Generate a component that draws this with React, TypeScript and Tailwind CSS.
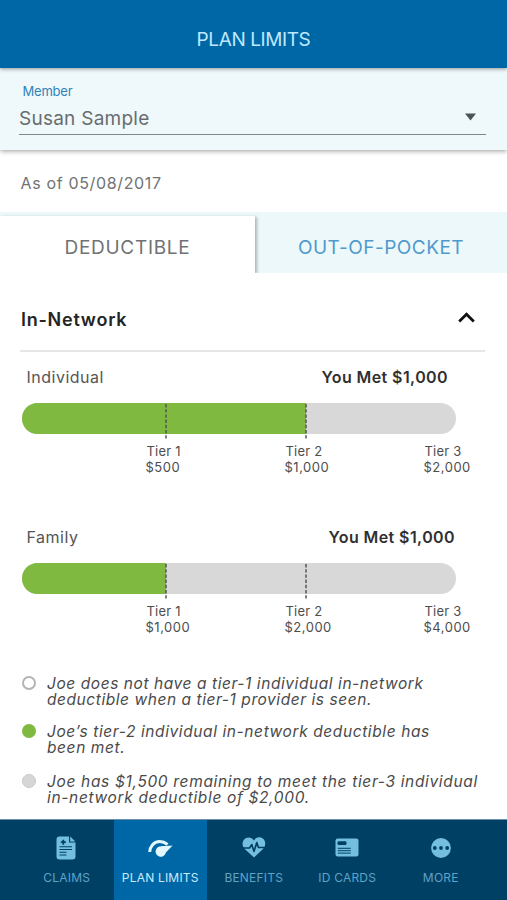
import React, { useState } from "react";

const limits = [
  {
    name: "Individual",
    met: "You Met $1,000",
    metClass: "pr-[8px]",
    fillClass: "w-[284px]",
    tiers: ["$500", "$1,000", "$2,000"],
  },
  {
    name: "Family",
    met: "You Met $1,000",
    metClass: "pr-[1px]",
    fillClass: "w-[144px]",
    tiers: ["$1,000", "$2,000", "$4,000"],
  },
];

const notes = [
  {
    dot: "border-2 border-[#b4b4b4] bg-white",
    gap: "mb-4",
    lines: [
      { text: "Joe does not have a tier-1 individual in-network", track: "tracking-[0.570px]" },
      { text: "deductible when a tier-1 provider is seen.", track: "tracking-[0.560px]" },
    ],
  },
  {
    dot: "bg-[#7fb93f]",
    gap: "mb-[18px]",
    lines: [
      { text: "Joe’s tier-2 individual in-network deductible has", track: "tracking-[0.600px]" },
      { text: "been met.", track: "tracking-[0.600px]" },
    ],
  },
  {
    dot: "border border-[#c9c9c9] bg-[#d6d6d6]",
    gap: "",
    lines: [
      { text: "Joe has $1,500 remaining to meet the tier-3 individual", track: "tracking-[0.660px]" },
      { text: "in-network deductible of $2,000.", track: "tracking-[0.660px]" },
    ],
  },
];

const ClaimsIcon = () => (
  <svg width="20" height="24" viewBox="0 0 20 24" className="mr-[2px]">
    <path
      fill="#74bfe0"
      d="M3.5 0.5H13V6.5H19.5V20.5a3 3 0 0 1-3 3h-13a3 3 0 0 1-3-3v-17a3 3 0 0 1 3-3Z"
    />
    <path fill="#74bfe0" d="M14.2 0.5 19.3 5.4H14.2Z" />
    <path stroke="#004064" strokeWidth="1.8" d="M7.3 3.7v5M4.8 6.2h5" />
    <path stroke="#004064" strokeWidth="1.1" d="M3.5 10.7h12.5M3.5 13.5h12.5M3.5 16.3h7M3.5 19h7" />
  </svg>
);

const GaugeIcon = () => (
  <svg width="26" height="18" viewBox="0 0 26 18">
    <path
      fill="none"
      stroke="#e3f7ff"
      strokeWidth="3"
      d="M2.7 13C2.9 8.3 6.3 2.6 12.7 2.6C15.8 2.6 18.3 3.7 20.6 5.5"
    />
    <path
      fill="#e3f7ff"
      d="M25.6 6.5 18.9 13.5A5.2 5.2 0 1 1 11.6 7.8C14.5 6.5 20.5 7.2 25.6 6.5Z"
    />
  </svg>
);

const HeartIcon = () => (
  <svg width="24" height="21" viewBox="0 0 24 21">
    <path
      fill="#74bfe0"
      d="M12 20.5 3 12.2C-.8 8.5.2 3.2 3.6 1.3 6.6-.4 10 .6 12 3.5 14-.6 19-.4 21.4 2c2.7 2.7 2.3 7.2-.4 10Z"
    />
    <path
      fill="none"
      stroke="#004064"
      strokeWidth="1.6"
      strokeLinejoin="round"
      d="M1 11h6.5l2.3-3.5 2.2 7 2.8-9 1.6 5h6.5"
    />
  </svg>
);

const CardIcon = () => (
  <svg width="24" height="19" viewBox="0 0 24 19">
    <rect x="0.5" y="0.5" width="23" height="18" rx="2.2" fill="#74bfe0" />
    <rect x="2.5" y="3.3" width="9" height="3.8" rx="1.4" fill="#004064" />
    <path stroke="#004064" strokeWidth="1" d="M2.8 10.3h13M2.8 12.7h13M2.8 15.1h13" />
  </svg>
);

const MoreIcon = () => (
  <svg width="20" height="20" viewBox="0 0 20 20">
    <circle cx="10" cy="10" r="9.9" fill="#74bfe0" />
    <circle cx="3.8" cy="10" r="1.9" fill="#004064" />
    <circle cx="10" cy="10" r="1.9" fill="#004064" />
    <circle cx="16.2" cy="10" r="1.9" fill="#004064" />
  </svg>
);

const navItems = [
  { label: "CLAIMS", icon: <ClaimsIcon /> },
  { label: "PLAN LIMITS", icon: <GaugeIcon /> },
  { label: "BENEFITS", icon: <HeartIcon /> },
  { label: "ID CARDS", icon: <CardIcon /> },
  { label: "MORE", icon: <MoreIcon /> },
];

const TierLine = ({ position }) => (
  <svg width="2" height="37" viewBox="0 0 2 37" className={`absolute top-px ${position}`}>
    <path stroke="#555" strokeWidth="1.5" strokeDasharray="3.4 1.8" d="M1 0v35.5" />
  </svg>
);

const LimitBar = ({ limit }) => (
  <div className="h-[160px]">
    <div className="flex h-[22px] items-center justify-between pl-[4.5px] text-[16px]">
      <span className="tracking-[0.5px] text-[#555]">{limit.name}</span>
      <span className={`font-semibold tracking-[0.4px] text-[#303030] ${limit.metClass}`}>
        {limit.met}
      </span>
    </div>
    <div className="relative mt-[15px] h-[31px] rounded-full bg-[#d8d8d8]">
      <div className="h-full w-full overflow-hidden rounded-full">
        <div className={`h-full bg-[#7fb93f] ${limit.fillClass}`} />
      </div>
      <TierLine position="left-[142.5px]" />
      <TierLine position="left-[283px]" />
    </div>
    <div className="mt-[9px] flex pl-[123.5px] text-[13px] leading-4 tracking-[0.5px] text-[#4d4d4d]">
      {limit.tiers.map((amount, index) => (
        <div key={index} className="w-[139px] shrink-0">
          <p className="pl-px tracking-[0.2px]">Tier {index + 1}</p>
          <p>{amount}</p>
        </div>
      ))}
    </div>
  </div>
);

const App = () => {
  const [tab, setTab] = useState("deductible");
  const [open, setOpen] = useState(true);

  return (
    <div className="flex h-[900px] w-[507px] flex-col overflow-hidden bg-white font-[Inter,sans-serif]">
      <header className="relative z-20 flex h-[68px] shrink-0 items-center justify-center bg-[#0067a6] pt-[10px] shadow-[0_1px_4px_rgba(0,0,0,0.4)]">
        <h1 className="text-[19px] leading-none tracking-[-0.4px] text-[#bfe8ff]">PLAN LIMITS</h1>
      </header>

      <section className="relative z-10 h-[82px] shrink-0 bg-[#eff8fa] px-[19px] pt-[15px] shadow-[0_1px_5px_rgba(0,0,0,0.4)]">
        <p className="pl-[3.5px] text-[13px] leading-4 tracking-[-0.2px] text-[#2e83b9]">Member</p>
        <button className="mt-[5px] flex h-[31px] w-[467px] items-center justify-between border-b-[1.5px] border-[#7d868c] pr-[10px]">
          <span className="text-[19px] tracking-[0.25px] text-[#686d70]">Susan Sample</span>
          <svg width="11" height="8" viewBox="0 0 11 8" className="mb-[5px]">
            <path fill="#4c5357" d="M0 0.5h11L5.5 7.5Z" />
          </svg>
        </button>
      </section>

      <p className="flex h-[62px] shrink-0 items-center pt-[4px] pl-[20.5px] text-[16px] tracking-[0.65px] text-[#707274]">
        As of 05/08/2017
      </p>

      <div className="flex h-[61px] shrink-0 overflow-hidden bg-[#edf8fb] text-[19px]">
        <button
          onClick={() => setTab("deductible")}
          className="mt-1 w-[255px] bg-white pt-[8px] tracking-[0.7px] text-[#707274] shadow-[2px_1px_3px_rgba(0,0,0,0.28)]"
        >
          DEDUCTIBLE
        </button>
        <button
          onClick={() => setTab("pocket")}
          className="mt-1 flex-1 pt-[8px] tracking-[0.5px] text-[#4f9acb]"
        >
          OUT-OF-POCKET
        </button>
      </div>

      <main className="min-h-0 flex-1">
        <button
          onClick={() => setOpen(!open)}
          className="ml-[20px] flex h-[79px] w-[465px] items-center justify-between border-b-2 border-[#e6e6e6] pt-[16px] pr-[10px] pl-px"
        >
          <span className="text-[18px] font-semibold tracking-[0.75px] text-[#242424]">In-Network</span>
          <svg width="17" height="11" viewBox="0 0 17 11" className="mb-[5px]">
            <path fill="none" stroke="#111" strokeWidth="2.8" d="M1.2 9.5 8.5 2.2 15.8 9.5" />
          </svg>
        </button>

        <div className="mt-[14px] ml-[22px] w-[434px]">
          {limits.map((limit) => (
            <LimitBar key={limit.name} limit={limit} />
          ))}
        </div>

        <ul className="-mt-[10px] ml-[22px] text-[15.5px] leading-4 text-[#4a4a4a] italic">
          {notes.map((note, index) => (
            <li key={index} className={`flex ${note.gap}`}>
              <span className={`mr-[11px] size-[14px] shrink-0 rounded-full ${note.dot}`} />
              <div className="whitespace-nowrap">
                {note.lines.map((line) => (
                  <p key={line.text} className={line.track}>
                    {line.text}
                  </p>
                ))}
              </div>
            </li>
          ))}
        </ul>
      </main>

      <nav className="flex h-[81px] shrink-0 border-t border-[#6d91ad] bg-[#004064] pl-[20px]">
        {navItems.map((item) => (
          <a
            key={item.label}
            className={`flex w-[93.5px] flex-col items-center ${
              item.label === "PLAN LIMITS" ? "bg-[#0067a6] text-[#c8ebfc]" : "text-[#5fa3c8]"
            }`}
          >
            <span className="mt-[14px] flex h-[27px] items-center">{item.icon}</span>
            <span className="mt-[9px] text-[12px] leading-4 tracking-[0.2px] whitespace-nowrap">
              {item.label}
            </span>
          </a>
        ))}
      </nav>
    </div>
  );
};

export default App;
